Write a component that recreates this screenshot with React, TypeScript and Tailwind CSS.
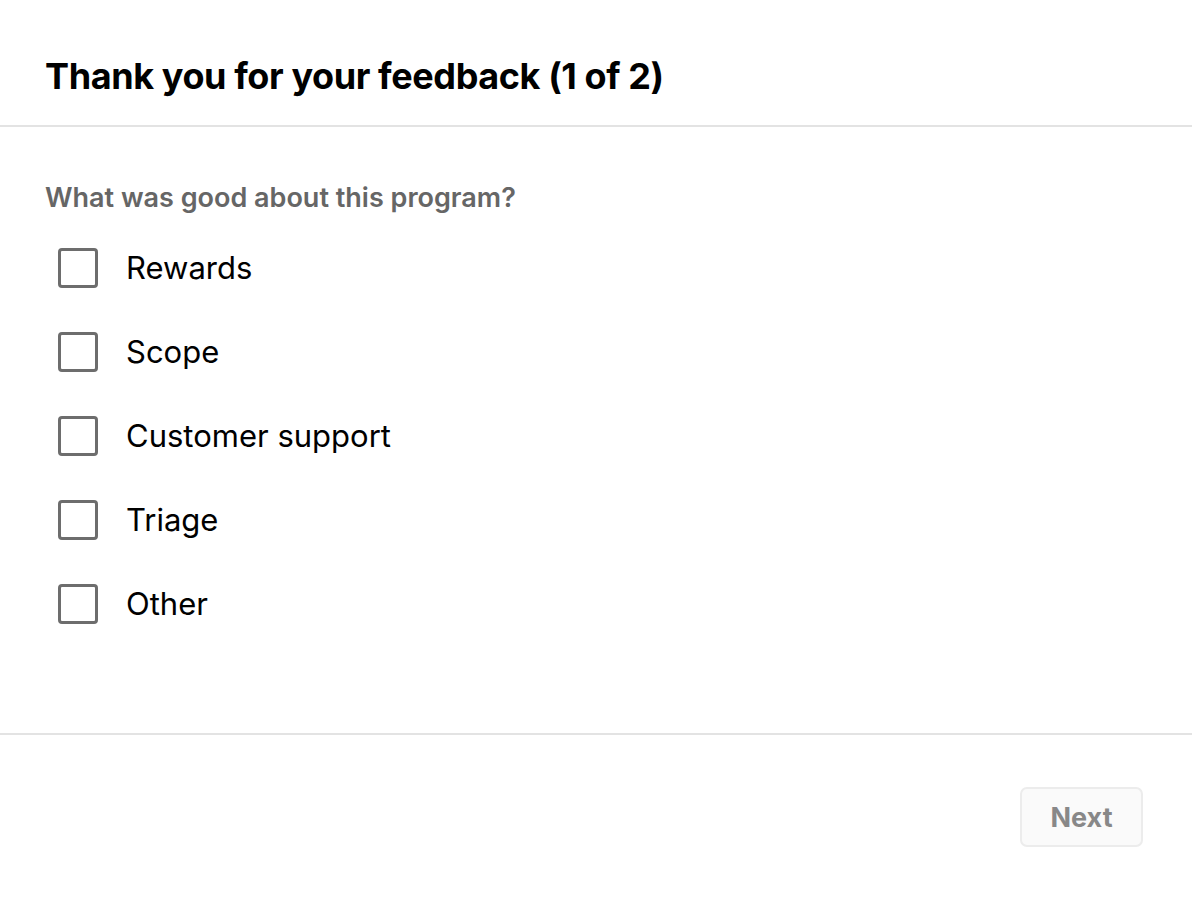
import React from "react";

const options = ["Rewards", "Scope", "Customer support", "Triage", "Other"];

export default function App() {
  return (
    <div
      className="w-[1192px] h-[898px] bg-white flex flex-col text-black"
      style={{ fontFamily: "Inter, 'Liberation Sans', sans-serif" }}
    >
      <div className="h-[127px] px-[45px] pt-[54px] border-b-2 border-[#e3e3e3] shrink-0">
        <h1 className="text-[36px] leading-[44px] font-bold tracking-[-0.4px]">
          Thank you for your feedback (1 of 2)
        </h1>
      </div>
      <div className="h-[608px] px-[45px] pt-[55px] border-b-2 border-[#e3e3e3] shrink-0">
        <p className="text-[27px] leading-[32px] font-semibold text-[#666666]">
          What was good about this program?
        </p>
        <div className="mt-[34px] flex flex-col gap-[44px] pl-[13px]">
          {options.map((o) => (
            <label key={o} className="flex items-center gap-[28px] h-[40px]">
              <span className="w-[40px] h-[40px] rounded-[4px] border-[3px] border-[#6d6d6d] bg-white shrink-0" />
              <span className="text-[31px] leading-[40px]">{o}</span>
            </label>
          ))}
        </div>
      </div>
      <div className="flex-1 flex items-center justify-end pr-[49px]">
        <button className="w-[123px] h-[60px] pt-[3px] rounded-[7px] border-2 border-[#ececec] bg-[#fafafa] text-[27px] font-bold text-[#888888]">
          Next
        </button>
      </div>
    </div>
  );
}
